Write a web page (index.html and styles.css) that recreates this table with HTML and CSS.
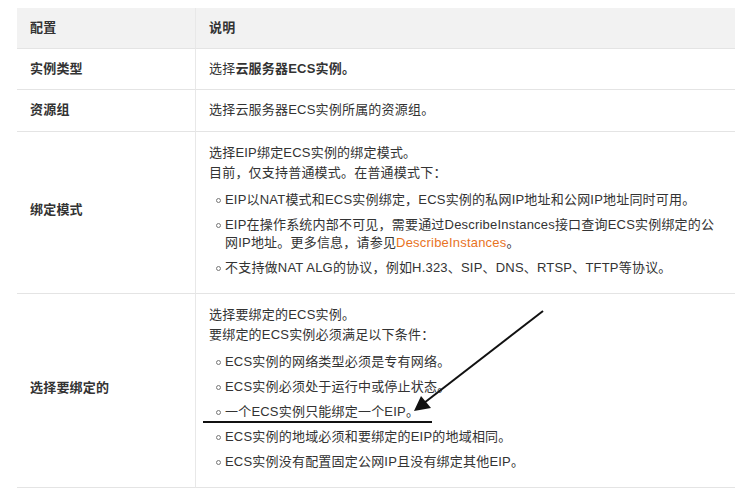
FILE: index.html
```html
<!DOCTYPE html>
<html lang="zh-CN">
<head>
  <meta charset="UTF-8" />
  <title>绑定EIP</title>
  <link rel="stylesheet" href="styles.css">
</head>
<body>
  <div class="page">
    <table class="params">
      <thead>
        <tr>
          <th class="col-name">配置</th>
          <th>说明</th>
        </tr>
      </thead>
      <tbody>
        <tr>
          <td class="col-name">实例类型</td>
          <td>选择<b>云服务器ECS实例。</b></td>
        </tr>
        <tr class="row-tall">
          <td class="col-name">资源组</td>
          <td>选择云服务器ECS实例所属的资源组。</td>
        </tr>
        <tr class="row-block">
          <td class="col-name">绑定模式</td>
          <td>
            <p>选择EIP绑定ECS实例的绑定模式。</p>
            <p>目前，仅支持普通模式。在普通模式下：</p>
            <ul>
              <li>EIP以NAT模式和ECS实例绑定，ECS实例的私网IP地址和公网IP地址同时可用。</li>
              <li>EIP在操作系统内部不可见，需要通过DescribeInstances接口查询ECS实例绑定的公网IP地址。更多信息，请参见<a href="#">DescribeInstances</a>。</li>
              <li>不支持做NAT ALG的协议，例如H.323、SIP、DNS、RTSP、TFTP等协议。</li>
            </ul>
          </td>
        </tr>
        <tr class="row-block">
          <td class="col-name">选择要绑定的</td>
          <td>
            <p>选择要绑定的ECS实例。</p>
            <p>要绑定的ECS实例必须满足以下条件：</p>
            <ul>
              <li>ECS实例的网络类型必须是专有网络。</li>
              <li>ECS实例必须处于运行中或停止状态。</li>
              <li>一个ECS实例只能绑定一个EIP。</li>
              <li>ECS实例的地域必须和要绑定的EIP的地域相同。</li>
              <li>ECS实例没有配置固定公网IP且没有绑定其他EIP。</li>
            </ul>
          </td>
        </tr>
      </tbody>
    </table>

    <!-- hand-drawn annotation on top of the screenshot -->
    <svg class="markup" width="746" height="500" viewBox="0 0 746 500">
      <line x1="543" y1="311" x2="424" y2="403" stroke="#111" stroke-width="2"/>
      <polygon points="414,411 421,396 431,408" fill="#111"/>
      <line x1="203" y1="422" x2="432" y2="422" stroke="#111" stroke-width="2"/>
    </svg>
  </div>
</body>
</html>
```

FILE: styles.css
```css
body {
  margin: 0;
  background: #fff;
  font-family: "Liberation Sans", "Noto Sans CJK SC", sans-serif;
  font-size: 13px;
  color: #333;
}
.page {
  position: relative;
  width: 746px;
  height: 500px;
  padding: 8px 0 0 17px;
  box-sizing: border-box;
}
.params {
  width: 718px;
  border-collapse: separate;
  border-spacing: 0;
  table-layout: fixed;
}
.params th,
.params td {
  text-align: left;
  line-height: 20px;
  padding: 10px 13px;
  border-bottom: 1px solid #e4e4e4;
  vertical-align: middle;
  letter-spacing: 0.2px;
}
.params th {
  background: #f2f2f2;
  font-weight: bold;
  color: #333;
}
.params .col-name {
  width: 152px;
  font-weight: bold;
  border-right: 1px solid #e8e8e8;
}
.params .row-tall td {
  padding-bottom: 11px;
}
.params .row-block td {
  padding: 11px 13px 16px;
}
.params p {
  margin: 0;
}
.params ul {
  margin: 8px 0 0;
  padding-left: 16px;
  list-style: none;
}
.params li {
  position: relative;
  line-height: 18px;
  margin-top: 7px;
}
.params li:first-child {
  margin-top: 0;
}
.params li::before {
  content: "";
  position: absolute;
  left: -9px;
  top: 7px;
  width: 3px;
  height: 3px;
  border: 1px solid #777;
  border-radius: 50%;
}
.params a {
  color: #e8731f;
  text-decoration: none;
}
.markup {
  position: absolute;
  left: 0;
  top: 0;
  pointer-events: none;
}
```
